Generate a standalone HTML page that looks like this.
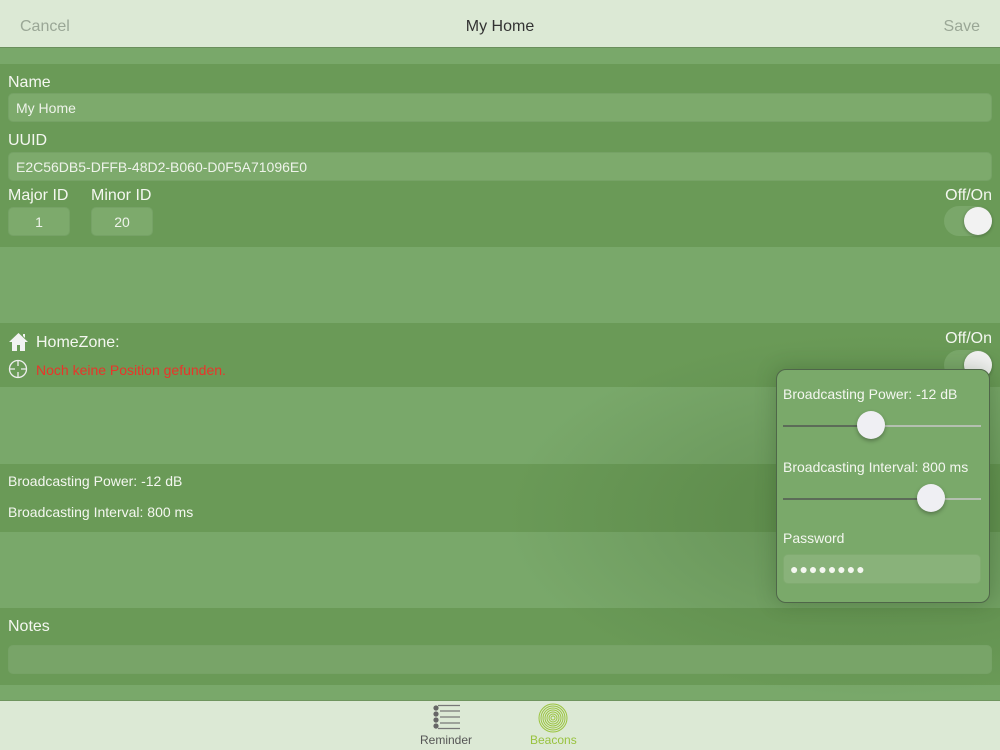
<!DOCTYPE html>
<html><head><meta charset="utf-8"><style>
*{margin:0;padding:0;box-sizing:border-box}
body{width:1000px;height:750px;overflow:hidden;background:#79a86a;font-family:"Liberation Sans",sans-serif;color:#f4f7f0;position:relative}
.abs{position:absolute}
.nav{left:0;top:0;width:1000px;height:48px;background:#dce9d5;border-bottom:1px solid #6a8f5c}
.dark{position:absolute;left:0;width:1000px;background:#6a9a57}
.field{position:absolute;background:#7daa6c;border-radius:5px;border:1px solid #76a266;font-size:14px;color:#eef3ea;padding-left:7px;line-height:28px}
.lbl{position:absolute;font-size:16px;color:#f4f7f0}
.tog{position:absolute;width:48px;height:30px;border-radius:15px;background:#7aa76a}
.tog i{position:absolute;right:0;top:1px;width:28px;height:28px;border-radius:50%;background:#f2f2f2;box-shadow:0 1px 3px rgba(0,0,0,.3)}
.tab{left:0;top:700px;width:1000px;height:50px;background:#dce9d5;border-top:1px solid #6f955f}
.thumb{position:absolute;width:28px;height:28px;border-radius:50%;background:#efeff3;box-shadow:0 2px 4px rgba(0,0,0,.3)}
</style></head><body>
<div class="abs nav">
<div class="abs" style="left:20px;top:18px;font-size:16px;color:#9aa796">Cancel</div>
<div class="abs" style="left:0;width:1000px;text-align:center;top:18px;font-size:16px;color:#333">My Home</div>
<div class="abs" style="right:20px;top:18px;font-size:16px;color:#9aa796">Save</div>
</div>
<div class="dark" style="top:64px;height:183px"></div>
<div class="dark" style="top:323px;height:64px"></div>
<div class="dark" style="top:464px;height:68px"></div>
<div class="dark" style="top:608px;height:77px"></div>
<div class="abs" style="left:500px;top:330px;width:500px;height:370px;background:radial-gradient(ellipse at 75% 50%,rgba(60,100,45,.35),rgba(60,100,45,0) 70%)"></div>

<div class="lbl" style="left:8px;top:74px">Name</div>
<div class="field" style="left:8px;top:93px;width:984px;height:29px">My Home</div>
<div class="lbl" style="left:8px;top:132px">UUID</div>
<div class="field" style="left:8px;top:152px;width:984px;height:29px">E2C56DB5-DFFB-48D2-B060-D0F5A71096E0</div>
<div class="lbl" style="left:8px;top:187px">Major ID</div>
<div class="lbl" style="left:91px;top:187px">Minor ID</div>
<div class="field" style="left:8px;top:207px;width:62px;height:29px;text-align:center;padding:0">1</div>
<div class="field" style="left:91px;top:207px;width:62px;height:29px;text-align:center;padding:0">20</div>
<div class="lbl" style="right:8px;top:187px">Off/On</div>
<div class="tog" style="left:944px;top:206px"><i></i></div>

<svg class="abs" style="left:8px;top:332px" width="21" height="20" viewBox="0 0 21 20"><path d="M10.5 1L1 10h3v9h5v-6h3v6h5v-9h3z M15 2h2v4l-2-2z" fill="#f2f2f2"/></svg>
<div class="lbl" style="left:36px;top:334px">HomeZone:</div>
<svg class="abs" style="left:8px;top:359px" width="20" height="20" viewBox="0 0 20 20" fill="none" stroke="#eee" stroke-width="1.3"><circle cx="10" cy="10" r="8.5"/><path d="M10 1v6M10 13v6M1 10h6M13 10h6"/></svg>
<div class="abs" style="left:36px;top:362px;font-size:14px;color:#e8352a">Noch keine Position gefunden.</div>
<div class="lbl" style="right:8px;top:330px">Off/On</div>
<div class="tog" style="left:944px;top:350px"><i></i></div>

<div class="abs" style="left:8px;top:473px;font-size:14px">Broadcasting Power: -12 dB</div>
<div class="abs" style="left:8px;top:504px;font-size:14px">Broadcasting Interval: 800 ms</div>
<div class="lbl" style="left:8px;top:618px">Notes</div>
<div class="field" style="left:8px;top:645px;width:984px;height:29px;background:#78a468"></div>

<div class="abs" style="left:776px;top:369px;width:214px;height:234px;background:#7aa96a;border:1px solid #4f6649;border-radius:10px;box-shadow:0 0 20px rgba(40,70,30,.3)">
<div class="abs" style="left:6px;top:16px;font-size:14px">Broadcasting Power: -12 dB</div>
<div class="abs" style="left:6px;top:55px;width:88px;height:2px;background:#5c6c58"></div>
<div class="abs" style="left:94px;top:55px;width:110px;height:2px;background:#b4c0b0"></div>
<div class="thumb" style="left:80px;top:41px"></div>
<div class="abs" style="left:6px;top:89px;font-size:14px">Broadcasting Interval: 800 ms</div>
<div class="abs" style="left:6px;top:128px;width:148px;height:2px;background:#5c6c58"></div>
<div class="abs" style="left:154px;top:128px;width:50px;height:2px;background:#b4c0b0"></div>
<div class="thumb" style="left:140px;top:114px"></div>
<div class="abs" style="left:6px;top:160px;font-size:14px">Password</div>
<div class="abs" style="left:6px;top:184px;width:198px;height:30px;background:#89b27a;border-radius:5px;border:1px solid #80ab70;font-size:14px;line-height:28px;padding-left:6px;letter-spacing:1px">●●●●●●●●</div>
</div>

<div class="abs tab">
<svg class="abs" style="left:432px;top:3px" width="30" height="29" viewBox="0 0 30 29"><g fill="#666"><circle cx="4" cy="4" r="2.6"/><circle cx="4" cy="10" r="2.6"/><circle cx="4" cy="16" r="2.6"/><circle cx="4" cy="22" r="2.6"/></g><g stroke="#777" stroke-width="1.2"><path d="M6 1.5h22M8 7h20M8 13h20M8 19h20M6 24.5h22"/></g></svg>
<div class="abs" style="left:420px;top:32px;font-size:12px;color:#555">Reminder</div>
<svg class="abs" style="left:538px;top:2px" width="30" height="30" viewBox="0 0 30 30" fill="none" stroke="#9bc43f" stroke-width="1"><circle cx="15" cy="15" r="14"/><circle cx="15" cy="15" r="12"/><circle cx="15" cy="15" r="10"/><circle cx="15" cy="15" r="8"/><circle cx="15" cy="15" r="6"/><circle cx="15" cy="15" r="4"/><circle cx="15" cy="15" r="2"/></svg>
<div class="abs" style="left:530px;top:32px;font-size:12px;color:#98c23e">Beacons</div>
</div>
</body></html>
